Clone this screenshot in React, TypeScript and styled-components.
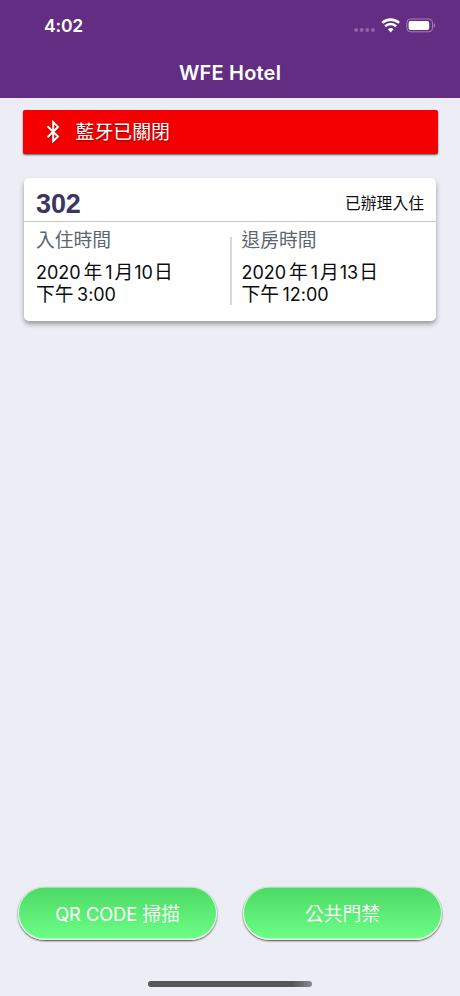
import React from "react";
import styled, { createGlobalStyle } from "styled-components";

const GlobalStyle = createGlobalStyle`
  * { box-sizing: border-box; }
  body { margin: 0; background: #edeef5; }
`;

const Screen = styled.div`
  width: 460px;
  height: 996px;
  display: flex;
  flex-direction: column;
  overflow: hidden;
  background: #edeef5;
  font-family: Inter, "Noto Sans CJK TC", sans-serif;
  color: #0b0b0b;
`;

const Header = styled.header`
  height: 98px;
  flex: none;
  background: #632d83;
  color: #fff;
`;

const StatusBar = styled.div`
  height: 50px;
  padding: 1px 24px 0 44px;
  display: flex;
  align-items: center;
  justify-content: space-between;
`;

const Clock = styled.span`
  font-size: 17.6px;
  line-height: 24px;
  font-weight: 600;
  letter-spacing: -0.2px;
`;

const Indicators = styled.div`
  display: flex;
  align-items: center;
  padding-bottom: 2px;
`;

const Title = styled.h1`
  margin: 0;
  padding-top: 9px;
  font-size: 20px;
  line-height: 28px;
  font-weight: 600;
  letter-spacing: 0.2px;
  text-align: center;
`;

const Main = styled.main`
  flex: 1;
  padding: 12px 22px 0;
`;

const Banner = styled.div`
  height: 43.5px;
  padding-left: 22.5px;
  display: flex;
  align-items: center;
  margin: 0 0.5px;
  background: #f50000;
  border-radius: 2px;
  box-shadow: 0 1px 2px rgba(20, 50, 70, 0.75);
  color: #fff;
  font-size: 18.9px;
  text-shadow: 0 1px 2px rgba(60, 0, 0, 0.6);

  svg { margin-right: 13.5px; filter: drop-shadow(0 1px 1px rgba(60, 0, 0, 0.4)); }
`;

const BannerText = styled.span`
  height: 28px;
  line-height: 29px;
`;

const Card = styled.section`
  height: 143px;
  margin: 24px 2px 0;
  background: #fff;
  border-radius: 5px;
  box-shadow: 0 3px 5px rgba(0, 0, 0, 0.36);
`;

const CardHeader = styled.div`
  height: 44px;
  padding: 9px 12px 0 12px;
  display: flex;
  align-items: center;
  justify-content: space-between;
  border-bottom: 1px solid #c9c9c9;
`;

const Room = styled.h2`
  margin: 0;
  font-family: "Liberation Sans", sans-serif;
  font-size: 27px;
  line-height: 36px;
  letter-spacing: -0.1px;
  color: #3b3566;
`;

const State = styled.span`
  font-size: 15.8px;
  line-height: 24px;
`;

const Stays = styled.div`
  display: grid;
  grid-template-columns: 205.5px 1fr;
  position: relative;
`;

const Stay = styled.div`
  padding: 5px 0 0 12px;
`;

const Divider = styled.i`
  position: absolute;
  left: 206px;
  top: 15px;
  width: 2px;
  height: 68px;
  background: #d8d8d8;
`;

const Label = styled.div`
  font-size: 18.8px;
  line-height: 28px;
  color: #5c666e;
`;

const When = styled.div`
  margin-top: 7px;
  font-size: 18px;
  line-height: 22.5px;
  white-space: nowrap;
`;

const Line = styled.div`
  height: 22.5px;
  display: flex;
  align-items: baseline;
`;

const Digits = styled.span<{ $before?: number; $after?: number }>`
  font-size: 18px;
  letter-spacing: -0.05px;
  margin-left: ${(p) => p.$before ?? 0}px;
  margin-right: ${(p) => p.$after ?? 0}px;
`;

const Han = styled.span`
  font-size: 18.8px;
`;

const Actions = styled.footer`
  height: 94px;
  flex: none;
  padding: 0 18px;
  display: flex;
  justify-content: space-between;
`;

const ActionButton = styled.button`
  width: 199px;
  height: 53px;
  padding: 2px 0 0;
  border: 0;
  border-radius: 27px;
  background: linear-gradient(#4cd964, #6dff87);
  box-shadow: inset 0 -0.5px 0 1px #e4f7e8, 0 1px 2px rgba(50, 25, 40, 0.8);
  color: #fff;
  font-family: inherit;
  font-size: 18.8px;
  font-weight: 350;
  line-height: 28px;
`;

const Latin = styled.span`
  font-size: 18.3px;
  font-weight: 400;
  letter-spacing: -0.05px;
`;

const HomeBar = styled.div`
  flex: none;
  height: 15px;

  &::before {
    content: "";
    display: block;
    width: 164px;
    height: 6px;
    margin: 0 auto;
    border-radius: 3px;
    background: linear-gradient(90deg, #56565b, #56565b 88%, #88888c);
  }
`;

function SignalDots() {
  return (
    <svg width="22" height="22" viewBox="0 0 22 22" fill="#9063ab">
      <circle cx="3.1" cy="16" r="2" />
      <circle cx="8.7" cy="16" r="2" />
      <circle cx="14.3" cy="16" r="2" />
      <circle cx="19.9" cy="16" r="2" />
    </svg>
  );
}

function Wifi() {
  return (
    <svg width="31" height="22" viewBox="0 0 31 22" fill="none" stroke="#fff" strokeWidth="2.6">
      <path d="M7.2 8.9a12.6 12.6 0 0 1 16.9 0" />
      <path d="M10.1 12.2a8.2 8.2 0 0 1 11.1 0" />
      <path d="M15.7 18.4l-2.8-3.1a4.1 4.1 0 0 1 5.6 0z" fill="#fff" stroke="none" />
    </svg>
  );
}

function Battery() {
  return (
    <svg width="30" height="22" viewBox="0 0 30 22">
      <rect x="0.9" y="5" width="25.6" height="12.8" rx="3.6" fill="none" stroke="#a481bb" />
      <rect x="2.6" y="6.9" width="20.6" height="9" rx="2" fill="#fff" />
      <path d="M27.8 9.2v4.4c1.9-.7 1.9-3.7 0-4.4z" fill="#a481bb" />
    </svg>
  );
}

function BluetoothIcon() {
  return (
    <svg width="17" height="26" viewBox="0 0 17 26" fill="none" stroke="#fff" strokeWidth="2">
      <path d="M2.5 7.2L13 17.5L8.2 22.2V3.2L13 7.9L2.5 18.2" />
    </svg>
  );
}

interface StayProps {
  label: string;
  day: string;
  time: string;
}

function StayTime({ label, day, time }: StayProps) {
  return (
    <Stay>
      <Label>{label}</Label>
      <When>
        <Line>
          <Digits $after={3}>2020</Digits>
          <Han>年</Han>
          <Digits $before={3} $after={2}>1</Digits>
          <Han>月</Han>
          <Digits $before={1} $after={1}>{day}</Digits>
          <Han>日</Han>
        </Line>
        <Line>
          <Han>下午</Han>
          <Digits $before={3.5}>{time}</Digits>
        </Line>
      </When>
    </Stay>
  );
}

export default function App() {
  return (
    <Screen>
      <GlobalStyle />
      <Header>
        <StatusBar>
          <Clock>4:02</Clock>
          <Indicators>
            <SignalDots />
            <Wifi />
            <Battery />
          </Indicators>
        </StatusBar>
        <Title>WFE Hotel</Title>
      </Header>
      <Main>
        <Banner>
          <BluetoothIcon />
          <BannerText>藍牙已關閉</BannerText>
        </Banner>
        <Card>
          <CardHeader>
            <Room>302</Room>
            <State>已辦理入住</State>
          </CardHeader>
          <Stays>
            <StayTime label="入住時間" day="10" time="3:00" />
            <Divider />
            <StayTime label="退房時間" day="13" time="12:00" />
          </Stays>
        </Card>
      </Main>
      <Actions>
        <ActionButton>
          <Latin>QR CODE </Latin>掃描
        </ActionButton>
        <ActionButton>公共門禁</ActionButton>
      </Actions>
      <HomeBar />
    </Screen>
  );
}
